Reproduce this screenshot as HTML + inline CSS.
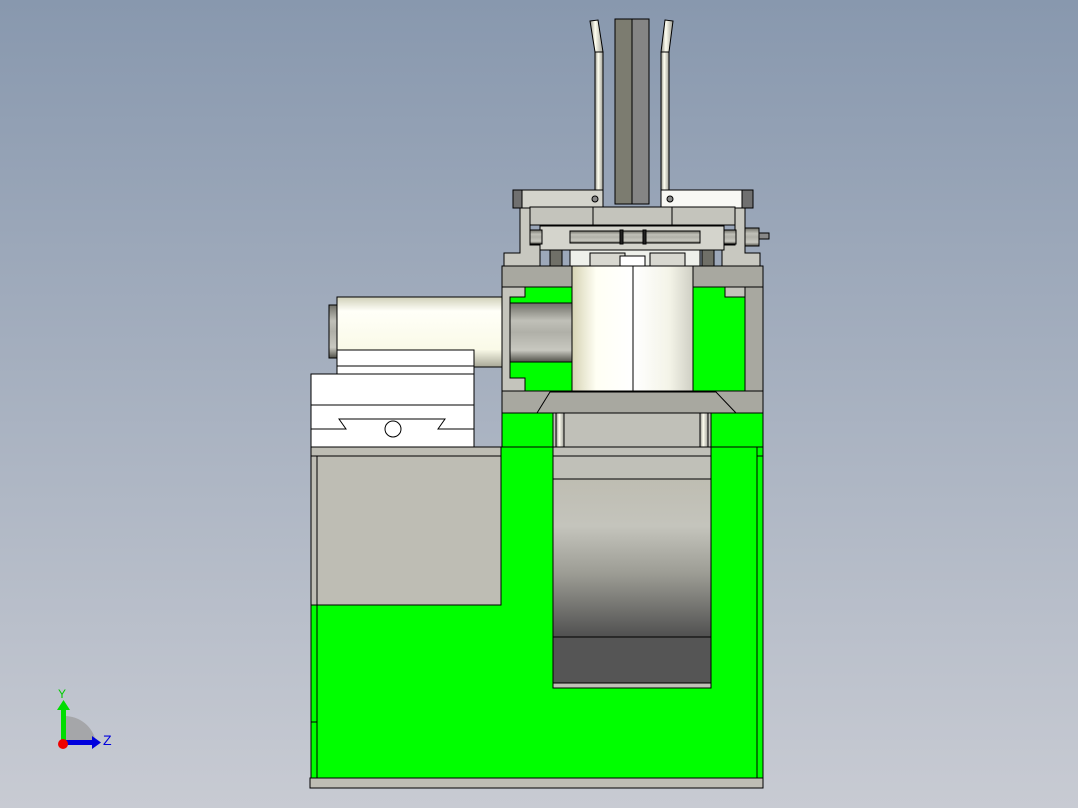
<!DOCTYPE html>
<html><head><style>
html,body{margin:0;padding:0;width:1078px;height:808px;overflow:hidden;background:linear-gradient(#8898ae,#c8cbd3);font-family:"Liberation Sans",sans-serif}
svg{position:absolute;left:0;top:0}
</style></head><body>
<svg width="1078" height="808" viewBox="0 0 1078 808">
<defs>
<linearGradient id="cyl" x1="0" y1="0" x2="1" y2="0"><stop offset="0" stop-color="#d6d3b4"/><stop offset="0.4" stop-color="#fffff4"/><stop offset="1" stop-color="#ffffff"/></linearGradient>
<linearGradient id="cyl2" x1="0" y1="0" x2="1" y2="0"><stop offset="0" stop-color="#ffffff"/><stop offset="0.6" stop-color="#f4f4e8"/><stop offset="1" stop-color="#cfcfc4"/></linearGradient>
<linearGradient id="hcyl" x1="0" y1="0" x2="0" y2="1"><stop offset="0" stop-color="#d0d0b8"/><stop offset="0.2" stop-color="#fffff8"/><stop offset="0.75" stop-color="#fafae8"/><stop offset="1" stop-color="#a8a898"/></linearGradient>
<linearGradient id="shaft" x1="0" y1="0" x2="0" y2="1"><stop offset="0" stop-color="#707068"/><stop offset="0.3" stop-color="#c0c0b8"/><stop offset="0.5" stop-color="#b0b0a8"/><stop offset="0.8" stop-color="#c8c8c0"/><stop offset="1" stop-color="#505048"/></linearGradient>
<linearGradient id="cav" x1="0" y1="0" x2="0" y2="1"><stop offset="0" stop-color="#bebdb2"/><stop offset="0.3" stop-color="#c4c4bc"/><stop offset="0.6" stop-color="#9c9c94"/><stop offset="1" stop-color="#505050"/></linearGradient>
<linearGradient id="rod" x1="0" y1="0" x2="1" y2="0"><stop offset="0" stop-color="#909088"/><stop offset="0.4" stop-color="#fffff0"/><stop offset="1" stop-color="#a0a098"/></linearGradient>
</defs>
<g stroke="#000" stroke-width="1">
<rect x="595" y="52" width="8" height="140" fill="url(#rod)"/>
<polygon points="590,21 598,20 603,52 595,52" fill="url(#rod)"/>
<rect x="661" y="52" width="8" height="140" fill="url(#rod)"/>
<polygon points="665,20 673,21 669,52 661,52" fill="url(#rod)"/>
<rect x="615" y="19" width="17" height="185" fill="#7c7c70"/>
<rect x="632" y="19" width="17" height="185" fill="#858585"/>
<rect x="513" y="190" width="90" height="18" fill="#d4d4cc"/>
<rect x="513" y="190" width="9" height="18" fill="#707070"/>
<rect x="661" y="190" width="92" height="18" fill="#f8f8f4"/>
<rect x="742" y="190" width="11" height="18" fill="#707070"/>
<circle cx="595" cy="199" r="3" fill="#888"/><circle cx="670" cy="199" r="3" fill="#888"/>
<polygon points="520,208 530,208 530,245 540,245 540,268 504,268 504,253 520,253" fill="#c8c8c0"/>
<polygon points="735,208 745,208 745,253 760,253 760,268 722,268 722,245 735,245" fill="#c8c8c0"/>
<rect x="530" y="207" width="205" height="18" fill="#c4c4bc"/>
<line x1="593" y1="207" x2="593" y2="225"/><line x1="672" y1="207" x2="672" y2="225"/>
<rect x="540" y="226" width="184" height="24" fill="#d4d4cc"/>
<rect x="570" y="231" width="130" height="12" fill="url(#shaft)"/>
<rect x="620" y="230" width="3" height="14" fill="#222"/><rect x="643" y="230" width="3" height="14" fill="#222"/>
<rect x="530" y="230" width="12" height="14" fill="url(#shaft)"/>
<rect x="724" y="230" width="12" height="14" fill="url(#shaft)"/>
<rect x="745" y="228" width="14" height="18" fill="url(#shaft)"/>
<rect x="759" y="233" width="10" height="6" fill="#888"/>
<rect x="550" y="250" width="12" height="17" fill="#707068"/><rect x="702" y="250" width="12" height="17" fill="#707068"/>
<rect x="570" y="250" width="130" height="17" fill="#eef0ea"/>
<rect x="590" y="253" width="35" height="14" fill="#d8d8d0"/><rect x="650" y="253" width="35" height="14" fill="#d8d8d0"/>
<rect x="620" y="256" width="25" height="11" fill="#fff"/>
<rect x="502" y="266" width="261" height="147" fill="#c4c4bc"/>
<rect x="502" y="266" width="261" height="21" fill="#a8a8a0"/>
<polygon points="525,287 572,287 572,391 525,391 525,378 510,378 510,297 525,297" fill="#00ff00"/>
<polygon points="693,287 725,287 725,297 745,297 745,391 693,391" fill="#00ff00"/>
<rect x="745" y="287" width="18" height="104" fill="#a8a8a0"/>
<rect x="510" y="303" width="62" height="59" fill="url(#shaft)"/>
<rect x="572" y="266" width="61" height="125" fill="url(#cyl)"/>
<rect x="633" y="266" width="60" height="125" fill="url(#cyl2)"/>
<rect x="502" y="391" width="261" height="22" fill="#a8a8a0"/>
<polyline points="537,413 550,392 716,392 736,413" fill="none"/>
<rect x="329" y="305" width="9" height="53" fill="url(#shaft)"/>
<rect x="337" y="297" width="165" height="70" fill="url(#hcyl)"/>
<rect x="337" y="350" width="137" height="24" fill="#fff"/>
<line x1="337" y1="366" x2="474" y2="366"/>
<rect x="311" y="374" width="163" height="73" fill="#fff"/>
<line x1="311" y1="405" x2="474" y2="405"/>
<polyline points="311,429 346,429 339,419 445,419 438,429 474,429" fill="none"/>
<circle cx="393" cy="429" r="8" fill="none"/>
<rect x="311" y="447" width="452" height="331" fill="#00ff00"/>
<rect x="757" y="447" width="6" height="331" fill="#00ff00"/>
<rect x="502" y="413" width="51" height="34" fill="#00ff00"/>
<rect x="711" y="413" width="52" height="34" fill="#00ff00"/>
<rect x="553" y="413" width="158" height="34" fill="#c0c0b8"/>
<rect x="556" y="413" width="8" height="34" fill="url(#rod)"/><rect x="700" y="413" width="8" height="34" fill="url(#rod)"/>
<rect x="311" y="447" width="190" height="158" fill="#bebdb4"/>
<line x1="311" y1="456" x2="501" y2="456"/><line x1="317" y1="456" x2="317" y2="778"/>
<line x1="311" y1="722" x2="317" y2="722"/>
<rect x="553" y="447" width="158" height="241" fill="#c0c0b8"/>
<line x1="553" y1="456" x2="711" y2="456"/>
<rect x="553" y="479" width="158" height="158" fill="url(#cav)"/>
<rect x="553" y="637" width="158" height="46" fill="#555"/>
<line x1="757" y1="456" x2="763" y2="456"/><line x1="757" y1="447" x2="757" y2="778"/>
<rect x="310" y="778" width="453" height="10" fill="#bebdb4"/>
</g>
<path d="M64,742 L64,716 A32,32 0 0 1 96,742 Z" fill="#999" opacity="0.7"/>
<rect x="61" y="708" width="5" height="34" fill="#00dd00"/><polygon points="57,710 63.5,700 70,710" fill="#00dd00"/>
<rect x="64" y="740" width="28" height="5" fill="#0000dd"/><polygon points="92,736 101,742.5 92,749" fill="#0000dd"/>
<circle cx="63" cy="744" r="5" fill="#e00"/>
<text x="58" y="698" font-size="12" fill="#00cc00">Y</text>
<text x="103" y="745" font-size="14" fill="#0000dd">Z</text>
</svg>
</body></html>
